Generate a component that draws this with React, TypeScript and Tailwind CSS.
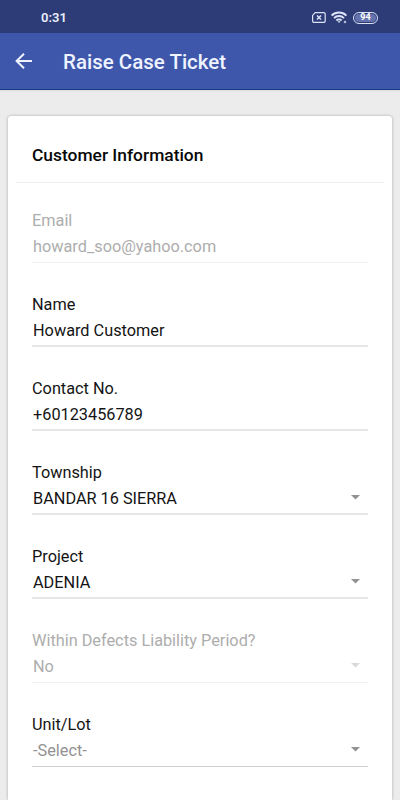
import React from 'react'

type FieldProps = {
  label: string
  value: string
  select?: boolean
  disabled?: boolean
  placeholder?: boolean
  line: string
}

const fields: FieldProps[] = [
  { label: 'Email', value: 'howard_soo@yahoo.com', disabled: true, line: 'border-b border-[#f1f1f1]' },
  { label: 'Name', value: 'Howard Customer', line: 'border-b-2 border-[#e6e6e6]' },
  { label: 'Contact No.', value: '+60123456789', line: 'border-b-2 border-[#e6e6e6]' },
  { label: 'Township', value: 'BANDAR 16 SIERRA', select: true, line: 'border-b-2 border-[#e6e6e6]' },
  { label: 'Project', value: 'ADENIA', select: true, line: 'border-b-2 border-[#e6e6e6]' },
  {
    label: 'Within Defects Liability Period?',
    value: 'No',
    select: true,
    disabled: true,
    line: 'border-b border-[#f1f1f1]',
  },
  { label: 'Unit/Lot', value: '-Select-', select: true, placeholder: true, line: 'border-b border-[#cfcfcf]' },
]

const Field: React.FC<FieldProps> = ({ label, value, select, disabled, placeholder, line }) => (
  <div
    className={`h-14 pt-px text-[16.3px] leading-[26px] ${line} ${disabled ? 'text-[#adadad]' : 'text-[#141414]'}`}
  >
    <div>{label}</div>
    <div className="flex items-center justify-between pl-px pr-2">
      <span className={placeholder ? 'text-[#929292]' : ''}>{value}</span>
      {select && (
        <svg width="9" height="5" viewBox="0 0 9 5" className={`mb-1 ${disabled ? 'text-[#dadada]' : 'text-[#929292]'}`}>
          <path d="M0 0h9L4.5 4.6z" fill="currentColor" />
        </svg>
      )}
    </div>
  </div>
)

const StatusIcons: React.FC = () => (
  <div className="flex items-center text-[#dce3f8]">
    <svg width="14" height="11" viewBox="0 0 14 11" fill="none" stroke="currentColor">
      <path d="M3.2.6h8.6a1.4 1.4 0 0 1 1.4 1.4v7a1.4 1.4 0 0 1-1.4 1.4H2A1.4 1.4 0 0 1 .6 9V3.4z" strokeWidth="1.2" />
      <path d="M5 3.5l4 4M9 3.5l-4 4" strokeWidth="1.5" />
    </svg>
    <svg width="17" height="13" viewBox="0 0 17 13" fill="none" stroke="currentColor" className="ml-[5px]">
      <path d="M.6 4.6a10.5 10.5 0 0 1 14.8 0" strokeWidth="1.9" />
      <path d="M3 7.1a7 7 0 0 1 10 0" strokeWidth="1.9" />
      <path d="M5.4 9.5a3.7 3.7 0 0 1 5.2 0" strokeWidth="1.9" />
      <path d="M6.6 10.6a2 2 0 0 1 2.8 0L8 12z" fill="currentColor" stroke="none" />
      <circle cx="14" cy="11" r="1.3" fill="currentColor" stroke="none" opacity=".75" />
    </svg>
    <div className="ml-[5px] flex h-3 w-[25px] items-center justify-center rounded-full border border-[#dce3f8] p-px">
      <div className="flex h-full w-full items-center justify-center rounded-full bg-[#6473ad] text-[9px] font-bold leading-none text-white">
        94
      </div>
    </div>
  </div>
)

const App: React.FC = () => {
  return (
    <div className="flex h-[800px] w-full flex-col overflow-hidden bg-[#ececec] font-['Roboto',sans-serif]">
      <div className="flex h-[33px] shrink-0 items-center justify-between bg-[#2d3c76] pl-[41px] pr-[22px] pt-[2px]">
        <span className="pt-px text-[13px] font-semibold text-[#e8edfb]">0:31</span>
        <StatusIcons />
      </div>

      <header className="flex h-[57px] shrink-0 items-center border-b border-[#173a86] bg-[#3f57ab] pl-[15px] text-[#eef3ff] shadow-[0_1px_2px_rgba(0,0,0,0.08)]">
        <svg width="17" height="16" viewBox="0 0 17 16" fill="none" stroke="currentColor" strokeWidth="2">
          <path d="M17 8H2M9 .8L1.6 8 9 15.2" />
        </svg>
        <h1 className="ml-[31px] pt-[3px] text-[20.5px] font-medium">Raise Case Ticket</h1>
      </header>

      <main className="mx-2 mt-[26px] flex-1 rounded-t-[3px] bg-white px-2 shadow-[0_0_3px_rgba(0,0,0,0.3)]">
        <h2 className="flex h-[67px] items-center border-b border-[#ededed] pl-4 pt-[13px] text-[17.4px] font-medium text-[#080808]">
          Customer Information
        </h2>
        <div className="flex flex-col gap-7 px-4 pt-6">
          {fields.map((field) => (
            <Field key={field.label} {...field} />
          ))}
        </div>
      </main>
    </div>
  )
}

export default App
